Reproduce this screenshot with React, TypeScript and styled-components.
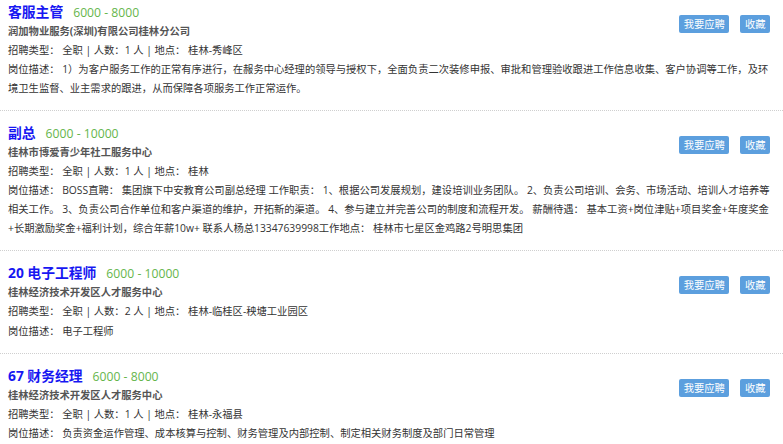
import styled, { createGlobalStyle } from "styled-components";

const GlobalStyle = createGlobalStyle`
  html, body {
    margin: 0;
    padding: 0;
    background: #fff;
    overflow: hidden;
  }
  body {
    font-family: "Open Sans", "Noto Sans CJK SC", sans-serif;
    color: #333;
  }
`;

const JobList = styled.div`
  margin-top: -10px;
`;

const JobItem = styled.div`
  padding: 12px 12px 12px 8px;
  border-bottom: 1px dotted #cfcfcf;
`;

const Head = styled.div`
  display: flex;
  justify-content: space-between;
  align-items: flex-start;
`;

const TitleRow = styled.div`
  display: flex;
  align-items: baseline;
  gap: 10px;
  height: 20px;
  line-height: 20px;
`;

const JobName = styled.a`
  font-size: 13.8px;
  font-weight: 700;
  color: #1717f2;
  text-decoration: none;
  cursor: pointer;
`;

const Salary = styled.span`
  font-size: 12.2px;
  color: #66b64c;
`;

const Company = styled.div`
  font-size: 10.3px;
  line-height: 19.05px;
  font-weight: 700;
  color: #555;
`;

const InfoLine = styled.div`
  font-size: 10.3px;
  line-height: 19.05px;
  color: #333;
`;

const Actions = styled.div`
  display: flex;
  gap: 11px;
  margin-top: 13px;
  margin-right: 1px;
`;

const ActionButton = styled.button`
  height: 18px;
  padding: 0 4.5px;
  border: none;
  border-radius: 2px;
  background: #5c9fde;
  color: #fff;
  font-family: "Open Sans", "Noto Sans CJK SC", sans-serif;
  font-size: 10.3px;
  line-height: 18px;
  cursor: pointer;
`;

type Job = {
  title: string;
  salary: string;
  company: string;
  count: number;
  place: string;
  desc: string;
};

const jobs: Job[] = [
  {
    title: "客服主管",
    salary: "6000 - 8000",
    company: "润加物业服务(深圳)有限公司桂林分公司",
    count: 1,
    place: "桂林-秀峰区",
    desc: "1）为客户服务工作的正常有序进行，在赧务中心经理的领导与授权下，全面负责二次装修申报、审批和管理验收跟进工作信息收集、客户协调等工作，及环境卫生监督、业主需求的跟进，从而保障各项服务工作正常运作。",
  },
  {
    title: "副总",
    salary: "6000 - 10000",
    company: "桂林市博爱青少年社工服务中心",
    count: 1,
    place: "桂林",
    desc: "BOSS直聘： 集团旗下中安教育公司副总经理 工作职责： 1、根据公司发展规划，建设培训业务团队。 2、负责公司培训、会务、市场活动、培训人才培养等相关工作。 3、负责公司合作单位和客户渠道的维护，开拓新的渠道。 4、参与建立并完善公司的制度和流程开发。 薪酬待遇： 基本工资+岗位津贴+项目奖金+年度奖金+长期激励奖金+福利计划，综合年薪10w+ 联系人杨总13347639998工作地点： 桂林市七星区金鸡路2号明思集团",
  },
  {
    title: "20 电子工程师",
    salary: "6000 - 10000",
    company: "桂林经济技术开发区人才服务中心",
    count: 2,
    place: "桂林-临桂区-秧塘工业园区",
    desc: "电子工程师",
  },
  {
    title: "67 财务经理",
    salary: "6000 - 8000",
    company: "桂林经济技术开发区人才服务中心",
    count: 1,
    place: "桂林-永福县",
    desc: "负责资金运作管理、成本核算与控制、财务管理及内部控制、制定相关财务制度及部门日常管理",
  },
];

const App = () => {
  return (
    <>
      <GlobalStyle />
      <JobList>
        {jobs.map((job, index) => (
          <JobItem key={index}>
            <Head>
              <div>
                <TitleRow>
                  <JobName>{job.title}</JobName>
                  <Salary>{job.salary}</Salary>
                </TitleRow>
                <Company>{job.company}</Company>
                <InfoLine>
                  招聘类型： 全职 | 人数：{job.count} 人 | 地点： {job.place}
                </InfoLine>
              </div>
              <Actions>
                <ActionButton>我要应聘</ActionButton>
                <ActionButton>收藏</ActionButton>
              </Actions>
            </Head>
            <InfoLine>岗位描述： {job.desc}</InfoLine>
          </JobItem>
        ))}
      </JobList>
    </>
  );
};

export default App;
